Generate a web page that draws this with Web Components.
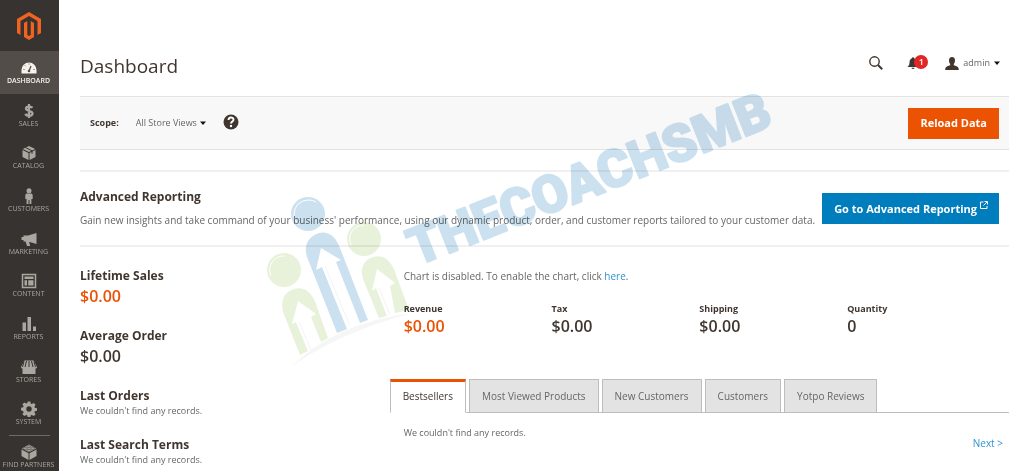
<!DOCTYPE html>
<html lang="en">
<head>
<meta charset="utf-8">
<meta name="viewport" content="width=device-width, initial-scale=1">
<title>Dashboard</title>
<style>
    :root {
        --ink: #41362f;
        --text: #666;
        --orange: #eb5202;
        --blue: #007dbd;
        --link: #2f93d3;
    }
    body {
        margin: 0;
        background: #fff;
        color: var(--text);
        font: 10px/16px "Open Sans", "Noto Sans", sans-serif;
    }
</style>
</head>
<body>
<admin-page>
    <side-menu slot="menu">
        <menu-item icon="dashboard" active>Dashboard</menu-item>
        <menu-item icon="sales">Sales</menu-item>
        <menu-item icon="catalog">Catalog</menu-item>
        <menu-item icon="customers">Customers</menu-item>
        <menu-item icon="marketing">Marketing</menu-item>
        <menu-item icon="content">Content</menu-item>
        <menu-item icon="reports">Reports</menu-item>
        <menu-item icon="stores">Stores</menu-item>
        <menu-item icon="system">System</menu-item>
        <menu-item icon="partners" last>Find Partners</menu-item>
    </side-menu>

    <page-header>Dashboard</page-header>
    <scope-bar></scope-bar>
    <report-banner>
        <span slot="title">Advanced Reporting</span>
        Gain new insights and take command of your business' performance, using our dynamic product, order, and customer reports tailored to your customer data.
    </report-banner>

    <dash-columns>
        <stat-block slot="side" heading="Lifetime Sales" value="$0.00" accent></stat-block>
        <stat-block slot="side" heading="Average Order" value="$0.00"></stat-block>
        <stat-block slot="side" heading="Last Orders">We couldn't find any records.</stat-block>
        <stat-block slot="side" heading="Last Search Terms">We couldn't find any records.</stat-block>

        <chart-note></chart-note>
        <totals-row>
            <total-item label="Revenue" accent>$0.00</total-item>
            <total-item label="Tax">$0.00</total-item>
            <total-item label="Shipping">$0.00</total-item>
            <total-item label="Quantity">0</total-item>
        </totals-row>
        <tab-panel tabs="Bestsellers,Most Viewed Products,New Customers,Customers,Yotpo Reviews">
            We couldn't find any records.
            <page-link slot="next">Next &gt;</page-link>
        </tab-panel>
    </dash-columns>

    <water-mark slot="overlay"></water-mark>
</admin-page>

<script>
const icons = {
    logo: '<svg viewBox="0 0 24 28" width="24" height="28" fill="#f26322"><path d="M12 0 0 7v14l3.500 2V9L12 4l8.500 5v14l3.500-2V7z"/><path d="M7 11l3.300-2v14l1.700 1 1.700-1V9L17 11v14l-5 3-5-3z"/></svg>',
    dashboard: '<path d="M.5 13.500V10a7.500 7.500 0 0 1 15 0v3.500z"/><g stroke="#524d49" fill="none"><path d="m8 11 2-5" stroke-width="1.300"/><path d="M8 3.500v1M4 5.500l.7.7M2.500 9.500h1M13.500 9.500h-1" stroke-width="1"/></g><circle cx="8" cy="11" r="1.300" fill="#524d49"/>',
    sales: '<path d="M8 1v14M11.500 4.800C10.500 3.500 5 2.500 5 5.500c0 3.200 6.500 1.500 6.500 5 0 3.200-6 2.500-7.300.5" fill="none" stroke="currentColor" stroke-width="2.300"/>',
    catalog: '<path d="M8 1 1.800 4 8 7l6.200-3zM1.500 5v7l6 3V8zM14.500 5l-6 3v7l6-3z"/><path d="m4.500 2.500 6.500 3.300v3" fill="none" stroke="#373330" stroke-width="1"/>',
    customers: '<circle cx="8" cy="2.700" r="2.500"/><path d="M5.500 5.500h5q1.200.5 1.200 2V11h-1.300v5H8.500v-4h-1v4H5.600v-5H4.300V7.500q0-1.500 1.200-2z"/>',
    marketing: '<path d="M15.500 2v11L7 10.500V4.500zM7 4.600v5.900H2.500V9H.5V6h2V4.600zM4.500 10.500H8l1.200 4.500H6z"/>',
    content: '<path d="M1.500 1.500h13v13h-13z" fill="none" stroke="currentColor" stroke-width="1.500"/><path d="M3.500 3.500h9v2.500h-9zM3.500 7.200H6v5.300H3.500zM7.200 7.200h5.300v5.300H7.200z"/>',
    reports: '<path d="M1.500 6.500H5V15H1.500zM6.500 1H10v14H6.500zM12 10.500h3V15h-3z"/>',
    stores: '<path d="M3.500 1.500h9L16 8q0 1.500-1.500 1.500V15h-13V9.500Q0 9.500 0 8z"/><path d="M5.500 2 4 8M8 2v6M10.500 2 12 8M3 2.500 1.500 8M13 2.500 14.500 8" stroke="#373330" fill="none"/>',
    system: '<path fill-rule="evenodd" d="M6.700.5h2.600l.5 2.200 1 .4 1.900-1.200 1.900 1.900-1.200 1.900.4 1 2.200.5v2.600l-2.200.5-.4 1 1.200 1.900-1.900 1.900-1.900-1.200-1 .4-.5 2.200H6.700l-.5-2.200-1-.4-1.900 1.200-1.900-1.900 1.200-1.900-.4-1L0 9.300V6.700l2.200-.5.4-1-1.200-1.900 1.900-1.900 1.900 1.200 1-.4zM8 5.300a2.700 2.700 0 1 0 0 5.400 2.700 2.700 0 0 0 0-5.400z"/>',
    partners: '<path d="M8 .5.8 4.500 8 8.300l7.200-3.800zM.5 5.500v6.500l7 4V9.200zM15.500 5.500l-7 3.700V16l7-4z"/><g fill="none" stroke="#373330" stroke-width=".5"><ellipse cx="8" cy="2.700" rx="2" ry="1"/><ellipse cx="4.300" cy="4.600" rx="2" ry="1"/><ellipse cx="11.700" cy="4.600" rx="2" ry="1"/><ellipse cx="8" cy="6.400" rx="2" ry="1"/></g>',
    search: '<svg viewBox="0 0 14 14" width="14" height="14" fill="none" stroke="#41362f"><circle cx="5.500" cy="5.500" r="4.700" stroke-width="1.400"/><path d="m9 9 4.200 4.200" stroke-width="2"/></svg>',
    bell: '<svg viewBox="0 0 12 12" width="12" height="12" fill="#41362f"><path d="M5 1.200a1 1 0 0 1 2 0c2 .8 2.500 2.500 2.500 4.500 0 2 .8 3 2 4.300H.5C1.700 8.700 2.500 7.700 2.500 5.700c0-2 .5-3.700 2.500-4.500zM4.500 10.700h3a1.500 1.300 0 0 1-3 0z"/></svg>',
    user: '<svg viewBox="0 0 14 13" width="14" height="13" fill="#41362f"><path d="M7 0c2 0 3 1.300 3 3.500 0 1.500-.5 2.700-1.200 3.600v1.200c3 1 5 1.200 5 4.700H.2c0-3.500 2-3.700 5-4.700V7.100C4.500 6.200 4 5 4 3.500 4 1.300 5 0 7 0z"/></svg>',
    help: '<svg viewBox="0 0 16 16" width="16" height="16"><circle cx="8" cy="8" r="7.500" fill="#41362f"/><path d="M5.500 6c0-3.300 5-3.200 5-.3C10.500 7.500 8 7.500 8 9.600" fill="none" stroke="#fff" stroke-width="1.900"/><circle cx="8" cy="12" r="1.200" fill="#fff"/></svg>',
    caret: '<svg viewBox="0 0 6 4" width="6" height="4"><path d="M0 .5h6L3 4z" fill="#111"/></svg>',
    external: '<svg viewBox="0 0 8 8" width="8" height="8" fill="none" stroke="#fff"><path d="M3.500 1H.5v6.500H7V5M3.500 4.500 7 1M4.500.5h3v3"/></svg>'
};

// Every element gets an open shadow root filled from its render()
class BaseElement extends HTMLElement {
    constructor() {
        super();
        this.attachShadow({ mode: 'open' });
    }

    connectedCallback() {
        this.shadowRoot.innerHTML = this.render();
    }
}

class AdminPage extends BaseElement {
    render() {
        return `
            <style>
                :host { display: flex; position: relative; }
                main { flex: 1; min-width: 0; padding: 51px 15px 0 21px; }
            </style>
            <slot name="menu"></slot>
            <main><slot></slot></main>
            <slot name="overlay"></slot>
        `;
    }
}
customElements.define('admin-page', AdminPage);

class SideMenu extends BaseElement {
    render() {
        return `
            <style>
                :host { display: block; flex: none; width: 59px; background: #373330; min-height: calc(100vh - 4px); margin-bottom: 4px; }
                nav { display: flex; flex-direction: column; min-height: calc(100vh - 4px); }
                .logo { display: grid; place-items: center; height: 51px; padding-right: 2px; flex: none; }
                svg { display: block; }
            </style>
            <nav aria-label="Main">
                <a class="logo" href="#" aria-label="Home">${icons.logo}</a>
                <slot></slot>
            </nav>
        `;
    }
}
customElements.define('side-menu', SideMenu);

class MenuItem extends BaseElement {
    render() {
        return `
            <style>
                :host { display: block; flex: 1; color: #aaa6a0; }
                :host([active]) { background: #524d49; color: #f7f3eb; font-weight: 600; }
                :host([last]) { flex: none; height: 36px; }
                :host([last])::before { content: ""; display: block; height: 1px; margin: 0 9px; background: #736963; }
                a { display: block; padding: 9px 2px 0 0; color: inherit; font-size: 7px; line-height: 9px; text-align: center; text-decoration: none; text-transform: uppercase; white-space: nowrap; }
                :host([last]) a { padding-top: 8px; }
                svg { display: block; margin: 0 auto; }
            </style>
            <a href="#">
                <svg viewBox="0 0 16 16" width="16" height="16" fill="currentColor">${icons[this.getAttribute('icon')]}</svg>
                <slot></slot>
            </a>
        `;
    }
}
customElements.define('menu-item', MenuItem);

class PageHeader extends BaseElement {
    render() {
        return `
            <style>
                :host { display: flex; align-items: flex-start; justify-content: space-between; height: 45px; }
                h1 { margin: 0; color: var(--ink); font-size: 19px; font-weight: 400; line-height: 30px; }
                .tools { display: flex; align-items: center; height: 24px; padding-right: 9px; }
                button { display: flex; align-items: center; border: 0; padding: 0; background: none; color: var(--text); font: inherit; font-size: 9px; }
                .bell { position: relative; margin: 0 26px 0 24px; }
                .badge { position: absolute; left: 7px; top: -2px; width: 14px; height: 14px; border-radius: 7px; background: #e22626; color: #fff; font-size: 9px; font-weight: 600; line-height: 14px; text-align: center; }
                .user { gap: 4px; }
            </style>
            <h1><slot></slot></h1>
            <div class="tools">
                <button aria-label="Search">${icons.search}</button>
                <button class="bell" aria-label="Notifications">${icons.bell}<span class="badge">1</span></button>
                <button class="user">${icons.user}<span>admin</span>${icons.caret}</button>
            </div>
        `;
    }
}
customElements.define('page-header', PageHeader);

class ScopeBar extends BaseElement {
    render() {
        return `
            <style>
                :host { display: flex; align-items: center; box-sizing: border-box; height: 54px; padding: 0 10px; background: #f8f8f8; border: solid #e3e3e3; border-width: 1px 0; }
                label { color: var(--ink); font-size: 9px; font-weight: 700; }
                .pick { display: flex; align-items: center; margin: 0 17px; }
                select { appearance: none; border: 0; padding: 0; margin-right: 2px; background: none; color: var(--text); font: inherit; font-size: 9px; }
                .help { border: 0; padding: 0; background: none; height: 16px; margin-bottom: 2px; }
                .help svg { display: block; }
                .primary { margin-left: auto; height: 31px; padding: 0 11px; border: 1px solid var(--orange); background: var(--orange); color: #fff; font: 700 11px/16px "Open Sans", sans-serif; }
            </style>
            <label for="scope">Scope:</label>
            <span class="pick">
                <select id="scope"><option>All Store Views</option></select>${icons.caret}
            </span>
            <button class="help" aria-label="Help">${icons.help}</button>
            <button class="primary">Reload Data</button>
        `;
    }
}
customElements.define('scope-bar', ScopeBar);

class ReportBanner extends BaseElement {
    render() {
        return `
            <style>
                :host { display: flex; align-items: center; justify-content: space-between; box-sizing: border-box; height: 77px; margin-top: 20px; padding-right: 10px; border: solid #f0f0f0; border-width: 2px 0; }
                h2 { margin: 0 0 7px; color: var(--ink); font-size: 12px; font-weight: 700; line-height: 16px; }
                p { margin: 0; white-space: nowrap; }
                a { display: flex; gap: 3px; flex: none; padding: 8px 11px 7px 12px; background: var(--blue); color: #fff; font-size: 11px; font-weight: 700; line-height: 16px; text-decoration: none; }
                @media (max-width: 1000px) {
                    p { white-space: normal; }
                }
            </style>
            <div>
                <h2><slot name="title"></slot></h2>
                <p><slot></slot></p>
            </div>
            <a href="#">Go to Advanced Reporting ${icons.external}</a>
        `;
    }
}
customElements.define('report-banner', ReportBanner);

class DashColumns extends BaseElement {
    render() {
        return `
            <style>
                :host { display: grid; grid-template-columns: 1fr 2fr; padding-top: 20px; }
                .side { display: flex; flex-direction: column; gap: 20px; }
            </style>
            <div class="side"><slot name="side"></slot></div>
            <div><slot></slot></div>
        `;
    }
}
customElements.define('dash-columns', DashColumns);

class StatBlock extends BaseElement {
    render() {
        const value = this.getAttribute('value');
        return `
            <style>
                :host { display: block; }
                h3 { margin: 0; color: var(--ink); font-size: 12px; font-weight: 700; line-height: 18px; }
                .value { color: var(--ink); font-size: 16px; font-weight: 600; line-height: 22px; }
                :host([accent]) .value { color: var(--orange); }
                .note { font-size: 9px; line-height: 11px; }
            </style>
            <h3>${this.getAttribute('heading')}</h3>
            ${value ? `<div class="value">${value}</div>` : '<div class="note"><slot></slot></div>'}
        `;
    }
}
customElements.define('stat-block', StatBlock);

class PageLink extends BaseElement {
    render() {
        return `<style>
                :host { display: inline; }
                a { color: var(--link); text-decoration: none; }
            </style><a href="#"><slot></slot></a>`;
    }
}
customElements.define('page-link', PageLink);

class ChartNote extends BaseElement {
    render() {
        return `
            <style>:host { display: block; padding: 1px 14px 18px; }</style>
            Chart is disabled. To enable the chart, click <page-link>here</page-link>.
        `;
    }
}
customElements.define('chart-note', ChartNote);

class TotalsRow extends BaseElement {
    render() {
        return `
            <style>:host { display: grid; grid-template-columns: repeat(4, 1fr); padding: 0 14px; }</style>
            <slot></slot>
        `;
    }
}
customElements.define('totals-row', TotalsRow);

class TotalItem extends BaseElement {
    render() {
        return `
            <style>
                :host { display: block; color: var(--ink); font-size: 16px; font-weight: 600; line-height: 20px; }
                :host([accent]) .value { color: var(--orange); }
                .label { font-size: 9px; font-weight: 700; line-height: 14px; }
            </style>
            <div class="label">${this.getAttribute('label')}</div>
            <div class="value"><slot></slot></div>
        `;
    }
}
customElements.define('total-item', TotalItem);

class TabPanel extends BaseElement {
    render() {
        const tabs = this.getAttribute('tabs').split(',');
        return `
            <style>
                :host { display: block; padding-top: 43px; }
                .tabs { display: flex; gap: 3px; border-bottom: 1px solid #bdbdbd; }
                button { height: 34px; margin: 0 0 -1px; padding: 0 12px; border: 1px solid #bdbdbd; background: #e3e3e3; color: var(--text); font: inherit; white-space: nowrap; }
                button[aria-selected="true"] { padding-bottom: 2px; border-top: 3px solid var(--orange); border-bottom-color: #fff; background: #fff; color: var(--ink); font-weight: 500; }
                .body { padding: 12px 14px 0; font-size: 9px; }
                .next { margin-top: -6px; padding-right: 6px; text-align: right; }
            </style>
            <div class="tabs" role="tablist">
                ${tabs.map((tab, i) => `<button role="tab" aria-selected="${i === 0}">${tab}</button>`).join('')}
            </div>
            <div class="body" role="tabpanel"><slot></slot></div>
            <div class="next"><slot name="next"></slot></div>
        `;
    }

    connectedCallback() {
        super.connectedCallback();
        const buttons = this.shadowRoot.querySelectorAll('button');
        buttons.forEach(button => button.addEventListener('click', () => {
            buttons.forEach(b => b.setAttribute('aria-selected', b === button));
        }));
    }
}
customElements.define('tab-panel', TabPanel);

// Brand mark laid over the page, multiplied so the text below stays readable
class WaterMark extends BaseElement {
    render() {
        return `
            <style>
                :host { position: absolute; left: 250px; top: 35px; pointer-events: none; mix-blend-mode: multiply; }
                svg { display: block; overflow: visible; }
                text { font: 900 52px Roboto, sans-serif; stroke: #cce1f0; stroke-width: 2px; stroke-linejoin: round; }
            </style>
            <svg viewBox="250 35 560 340" width="560" height="340">
                <path d="M291 367Q335 323 412 313Q338 333 291 367z" fill="#f6f6f6"/>
                <g fill="#cce1f0">
                    <circle cx="308" cy="214" r="17"/>
                    <path d="M337 333 307 257Q302 239 319 233Q333 230 340 248L368 320 360 323 336 262 341 260 321 248 316 270 322 267 347 329z"/>
                    <text transform="translate(422 264) rotate(-21.500)" x="-6">THECOACHSMB</text>
                </g>
                <g fill="#e8f2da">
                    <circle cx="364" cy="239" r="17"/>
                    <circle cx="284" cy="270" r="17"/>
                    <path d="M300 355 283 312Q279 294 294 289Q309 285 316 304L328 338 321 342 311 317 316 314 298 301 292 324 296 322 308 351z"/>
                    <path d="M379 318 363 279Q358 262 373 257Q387 253 394 269L409 310 395 313 390 286 395 283 377 269 372 291 376 288 387 316z"/>
                </g>
                <g fill="none" stroke="#fff">
                    <path d="M294 214a14 14 0 0 1 14-14M351 245a14 14 0 0 1 13-20M271 276a14 14 0 0 1 13-20"/>
                    <path d="M294 214a14 14 0 0 0 5 11M308 200a14 14 0 0 1 8 2"/>
                </g>
                <g fill="none" stroke="#f3f3f3">
                    <path d="m325 266 25 60M299 322l12 28M379 288l11 27"/>
                </g>
            </svg>
        `;
    }
}
customElements.define('water-mark', WaterMark);
</script>
</body>
</html>
